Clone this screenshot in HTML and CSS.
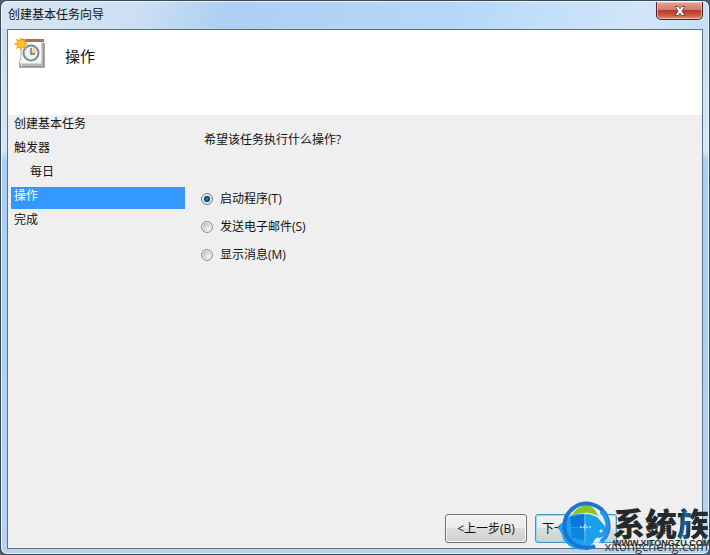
FILE: index.html
```
<!DOCTYPE html>
<html lang="zh-CN">
<head>
    <meta charset="UTF-8">
    <meta name="viewport" content="width=device-width, initial-scale=1.0">
    <title>创建基本任务向导</title>
    <link rel="stylesheet" href="styles.css">
</head>
<body>
    <div class="window">
        <div class="title-bar">
            <span class="title">创建基本任务向导</span>
            <button type="button" class="close-btn" aria-label="关闭">
                <svg width="12" height="10" viewBox="0 0 12 10">
                    <path d="M1 .5h3.200L6 2.800 7.800.5H11L7.800 5 11 9.500H7.800L6 7.200 4.200 9.500H1L4.200 5z" fill="#fff" stroke="#5a3a42" stroke-width=".8"/>
                </svg>
            </button>
        </div>

        <form class="wizard">
            <header class="header">
                <svg class="task-icon" width="34" height="34" viewBox="0 0 34 34">
                    <path d="M8 6h22v24H8z" fill="#b9b9b9"/>
                    <path d="M6 27v3h24V6" fill="none" stroke="#8b8b8b" stroke-width="1.500"/>
                    <path d="M7 3h21v24H5L7 20z" fill="#f8f8f8" stroke="#b5b0ac"/>
                    <path d="M8 2h22v3H8z" fill="#a9705c"/>
                    <circle cx="17" cy="16" r="7.500" fill="#eef3f5" stroke="#7b8a94" stroke-width="2"/>
                    <path d="M17 16v-5.500a5.500 5.500 0 0 1 5.500 5.500z" fill="#efd6a0"/>
                    <path d="M17 11v6h4" fill="none" stroke="#5f6c75" stroke-width="1.300"/>
                    <path d="M7 0l1.500 3L12 1.500 10.800 5l3.200 2-3.200 1.700 1 3.300-3.300-1.200L7 14l-1.700-3.200L2 12l1.200-3.300L0 7l3.200-1.800L2 1.500 5.300 3z" fill="#f7a81c"/>
                    <circle cx="7" cy="7" r="3.500" fill="#ffc02e"/>
                </svg>
                <h1>操作</h1>
            </header>

            <div class="content">
                <ul class="steps">
                    <li>创建基本任务</li>
                    <li>触发器</li>
                    <li class="sub-step">每日</li>
                    <li class="active">操作</li>
                    <li>完成</li>
                </ul>

                <fieldset class="options">
                    <legend>希望该任务执行什么操作?</legend>
                    <div class="option">
                        <input type="radio" id="program" name="action" checked>
                        <label for="program">启动程序(T)</label>
                    </div>
                    <div class="option">
                        <input type="radio" id="email" name="action">
                        <label for="email">发送电子邮件(S)</label>
                    </div>
                    <div class="option">
                        <input type="radio" id="message" name="action">
                        <label for="message">显示消息(M)</label>
                    </div>
                </fieldset>
            </div>

            <div class="buttons">
                <button type="button" class="btn">&lt;上一步(B)</button>
                <button type="button" class="btn btn-default">下一步(N)&gt;</button>
                <button type="button" class="btn btn-cancel">取消</button>
            </div>
        </form>
    </div>

    <!-- Site watermark -->
    <div class="watermark">
        <svg class="globe" width="56" height="54" viewBox="0 0 56 54">
            <circle cx="28" cy="27" r="21" fill="#e4f2f9" fill-opacity=".8"/>
            <path d="M14 16q5-9 15-11 9 1 12 11-7-4-14-3-7 0-13 3z" fill="#8bc424"/>
            <path d="M0 27l13-11q14-5 27 1 5 5 10 12-1 6-7 9-4-2-7 5-8 8-16 6-9-2-14-10-1-7-6-12z" fill="#1ba0ee"/>
            <path d="M13 17l14-3v13H14z" fill="#0a78d4"/>
            <path d="M14 28h13v12l-12-2z" fill="#0c86dc"/>
            <path d="M28 14v29" stroke="#62b9ed"/>
            <path d="M23 27h11M28 24v7" stroke="#fff" stroke-dasharray="2 1"/>
            <path d="M38 46A22 22 0 1 1 47 39" fill="none" stroke="#1b74d4" stroke-width="4"/>
            <path d="M44 11A22 22 0 0 1 44 42" fill="none" stroke="#2196e8" stroke-width="4"/>
            <circle cx="44" cy="31" r="1.500" fill="#fff"/>
        </svg>
        <div class="brand">
            <div class="brand-name">系统<span>族</span></div>
            <div class="brand-url">WWW.XITONGZU.COM</div>
        </div>
        <div class="site-url">xitongcheng.com</div>
    </div>
</body>
</html>
```
FILE: styles.css
```
:root {
    --frame-border: #34495c;
    --inner-border: #5b7188;
    --panel-color: #efefef;
    --highlight: #3399ff;
    --text-color: #111;
}

* {
    box-sizing: border-box;
}

body {
    margin: 0;
    height: 100vh;
    background: #4c5c6c;
    color: var(--text-color);
    font-family: "Open Sans", "Noto Sans CJK SC", sans-serif;
    font-size: 12px;
    line-height: 18px;
    overflow: hidden;
}

button,
input {
    font: inherit;
    color: inherit;
    margin: 0;
}

.window {
    height: 100%;
    display: flex;
    flex-direction: column;
    padding: 0 6px 5px;
    border: 1px solid var(--frame-border);
    border-radius: 7px;
    box-shadow: inset 0 0 0 1px #e8f4ff;
    background: linear-gradient(to bottom, #c8dcf0 0, #d5e6f5 150px, #a9cef3 160px, #b9d3ee 100%);
}

.title-bar {
    display: flex;
    justify-content: space-between;
    align-items: flex-start;
    height: 28px;
    margin: 0 -5px;
    padding: 0 5px 0 6px;
    border-top: 1px solid #edf6ff;
    border-radius: 6px 6px 0 0;
    background: linear-gradient(100deg, #d8e5f1 0, #cbdff3 20%, #accff3 32%, #b5d8fa 65%, #d2e6f8 90%, #c6dff5 100%);
}

.title {
    padding-top: 4px;
}

.close-btn {
    display: flex;
    justify-content: center;
    align-items: center;
    width: 47px;
    height: 18px;
    padding: 0;
    border: 1px solid #4d1f29;
    border-top: 0;
    border-radius: 0 0 5px 5px;
    box-shadow: inset 0 0 0 1px rgba(255, 220, 210, 0.6);
    background: linear-gradient(#e3a499 0, #d17b6c 45%, #b73a25 50%, #c6543b 75%, #e09276 100%);
}

.wizard {
    flex: 1;
    display: flex;
    flex-direction: column;
    border: 1px solid var(--inner-border);
    background: var(--panel-color);
}

.header {
    display: flex;
    align-items: flex-start;
    gap: 17px;
    height: 85px;
    padding: 7px 6px;
    background: #fff;
}

h1 {
    margin: 0;
    padding-top: 8px;
    font-size: 15px;
    line-height: 22px;
    font-weight: normal;
}

.content {
    flex: 1;
    display: flex;
    gap: 16px;
    padding-left: 3px;
}

.steps {
    display: flex;
    flex-direction: column;
    gap: 2px;
    width: 174px;
    margin: 0;
    padding: 0;
    list-style: none;
}

.steps li {
    height: 22px;
    padding-left: 3px;
}

.steps .sub-step {
    padding-left: 19px;
}

.steps .active {
    background: var(--highlight);
    color: #fff;
}

.options {
    flex: 1;
    margin: 0;
    padding: 0;
    border: 0;
}

legend {
    padding: 16px 3px 0;
    margin-bottom: 41px;
}

.option {
    display: flex;
    align-items: center;
    gap: 7px;
    margin-bottom: 10px;
}

input[type="radio"] {
    appearance: none;
    width: 12px;
    height: 12px;
    border: 1px solid #8c9299;
    border-radius: 50%;
    background: radial-gradient(circle at 65% 65%, #f0f0f0 10%, #b9bec4 70%);
    box-shadow: inset 0 0 0 1px #f4f4f4;
}

input[type="radio"]:checked {
    border-color: #607b91;
    background: radial-gradient(circle, #2996c4 0, #17445f 30%, #17445f 38%, #c4e1ef 50%);
}

.buttons {
    display: flex;
    justify-content: flex-end;
    gap: 8px;
    padding: 0 8px 5px;
}

.btn {
    width: 82px;
    height: 29px;
    padding: 0;
    border: 1px solid #707070;
    border-radius: 3px;
    box-shadow: inset 0 0 0 1px #fbfbfb;
    background: linear-gradient(#f2f2f2 0, #ebebeb 49%, #dddddd 50%, #cfcfcf 100%);
    white-space: nowrap;
}

.btn-default {
    padding-left: 6px;
    border-color: #3c9ac5;
    box-shadow: inset 0 0 0 1px #8fdcf5;
    text-align: left;
}

.btn-cancel {
    width: 69px;
    border-color: #e2e2e2;
    background: #ececec;
}

/* Watermark sits over the lower right corner of the window */
.watermark {
    position: absolute;
    right: 0;
    bottom: 1px;
    display: flex;
    align-items: flex-start;
}

.brand {
    width: 97px;
    color: #25292c;
    white-space: nowrap;
}

.brand-name {
    padding-top: 6px;
    font-family: "Noto Sans CJK SC", sans-serif;
    font-size: 32px;
    line-height: 32px;
    font-weight: 900;
}

.brand-name span {
    background: linear-gradient(100deg, #25292c 15%, #1769ad 30%, #25292c 50%, #25292c 80%, #174f7c 100%);
    background-clip: text;
    color: transparent;
}

.brand-url {
    font-family: "Liberation Sans", sans-serif;
    font-size: 9px;
    line-height: 10px;
    font-weight: bold;
}

.site-url {
    position: absolute;
    right: 2px;
    bottom: 0;
    color: #35383c;
    font-size: 13px;
    line-height: 16px;
}
```
